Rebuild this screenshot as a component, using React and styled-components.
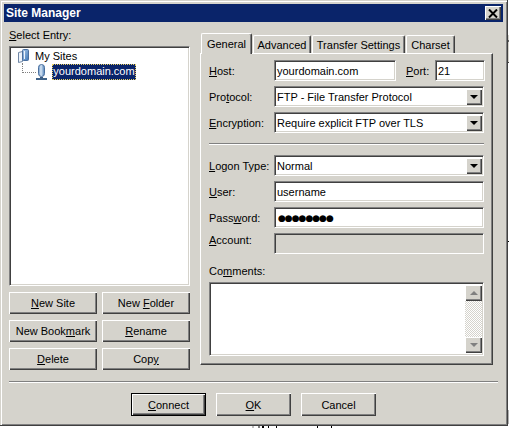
import React from 'react';
import styled, { createGlobalStyle } from 'styled-components';

const face = '#d5d3cc';
const navy = '#0a246a';

const GlobalStyle = createGlobalStyle`
  html, body {
    margin: 0;
    padding: 0;
    background: #fff;
    overflow: hidden;
  }
  * {
    box-sizing: border-box;
  }
`;

const Page = styled.div`
  width: 509px;
  height: 428px;
  overflow: hidden;
  font-family: 'Liberation Sans', Arial, sans-serif;
  font-size: 11px;
  color: #000;
`;

const TopArea = styled.div`
  display: flex;
`;

const Window = styled.div`
  width: 508px;
  height: 426px;
  flex: none;
  padding: 4px 4px 0 4px;
  background: ${face};
  border-right: 1px solid #404040;
  border-bottom: 1px solid #404040;
  box-shadow: inset 1px 1px 0 ${face}, inset 2px 2px 0 #fff, inset -1px -1px 0 #808080;
  display: flex;
  flex-direction: column;
`;

const SideStrip = styled.div`
  width: 1px;
  flex: none;
  padding-top: 35px;
`;

const SideMark = styled.div`
  height: ${(p) => p.$height}px;
  margin-bottom: ${(p) => p.$after}px;
  background: ${(p) => p.$color};
`;

const TitleBar = styled.div`
  height: 18px;
  flex: none;
  background: ${navy};
  color: #fff;
  font-weight: 700;
  font-size: 12px;
  padding: 0 2px;
  display: flex;
  align-items: center;
  justify-content: space-between;
`;

const CloseButton = styled.div`
  width: 16px;
  height: 14px;
  background: ${face};
  box-shadow: inset 1px 1px 0 #fff, inset -1px -1px 0 #404040, inset -2px -2px 0 #808080;
  display: flex;
  align-items: center;
  justify-content: center;
`;

const Main = styled.div`
  display: flex;
  padding: 6px 0 0 5px;
`;

const LeftColumn = styled.div`
  width: 181px;
  flex: none;
`;

const SelectLabel = styled.div`
  height: 18px;
  line-height: 14px;
`;

const Key = styled.u`
  text-underline-offset: 1px;
`;

const inset = `
  border: 1px solid;
  border-color: #808080 #fff #fff #808080;
  box-shadow: inset 1px 1px 0 #404040, inset -1px -1px 0 ${face};
`;

const Tree = styled.div`
  ${inset}
  height: 240px;
  background: #fff;
  padding: 2px 0 0 8px;
`;

const TreeRow = styled.div`
  display: flex;
  align-items: flex-start;
  height: 16px;
`;

const RootLabel = styled.span`
  margin-left: 6px;
  line-height: 14px;
`;

const Connector = styled.div`
  width: 14px;
  height: 10px;
  margin: -2px 0 0 4px;
  border-left: 1px dotted #808080;
  border-bottom: 1px dotted #808080;
  flex: none;
`;

const SiteIconBox = styled.div`
  margin-top: -1px;
  height: 16px;
  flex: none;
`;

const SelectedLabel = styled.span`
  width: 84px;
  margin: -1px 0 0 5px;
  height: 16px;
  line-height: 15px;
  text-align: center;
  white-space: nowrap;
  background: ${navy};
  color: #fff;
  outline: 1px dotted #e8d060;
  outline-offset: -1px;
`;

const ButtonGrid = styled.div`
  display: grid;
  grid-template-columns: 88px 88px;
  grid-auto-rows: 22px;
  column-gap: 5px;
  row-gap: 6px;
  margin-top: 6px;
`;

const Button = styled.div`
  background: ${face};
  box-shadow: inset 1px 1px 0 #fff, inset -1px -1px 0 #404040, inset -2px -2px 0 #808080;
  display: flex;
  align-items: center;
  justify-content: center;
  width: ${(p) => p.$width || 'auto'};
  ${(p) => p.$default && `
    outline: 1px solid #000;
    outline-offset: -1px;
    box-shadow: inset 2px 2px 0 #fff, inset -2px -2px 0 #404040, inset -3px -3px 0 #808080;
  `}
`;

const RightColumn = styled.div`
  width: 293px;
  margin-left: 10px;
  padding-top: 5px;
  flex: none;
`;

const TabStrip = styled.div`
  display: flex;
  align-items: flex-end;
  height: 20px;
  padding-left: 1px;
  column-gap: 1px;
`;

const Tab = styled.div`
  width: ${(p) => p.$width}px;
  height: ${(p) => (p.$active ? 21 : 18)}px;
  margin-bottom: ${(p) => (p.$active ? -1 : 0)}px;
  position: relative;
  z-index: ${(p) => (p.$active ? 1 : 0)};
  background: ${face};
  border-radius: 2px 2px 0 0;
  border-top: 1px solid #fff;
  border-left: 1px solid #fff;
  border-right: 1px solid #404040;
  box-shadow: inset -1px 0 0 #808080;
  display: flex;
  align-items: center;
  justify-content: center;
`;

const TabPanel = styled.div`
  height: 312px;
  border: 1px solid;
  border-color: #fff #404040 #404040 #fff;
  box-shadow: inset -1px -1px 0 #808080;
  padding: 6px 8px 0 8px;
`;

const FormRow = styled.div`
  display: flex;
  align-items: center;
  height: 21px;
  margin-bottom: 5px;
`;

const FieldLabel = styled.label`
  width: ${(p) => p.$width || 65}px;
  margin-left: ${(p) => p.$left || 0}px;
  margin-top: ${(p) => (p.$raised ? -7 : 0)}px;
  flex: none;
`;

const Field = styled.div`
  ${inset}
  height: 21px;
  width: ${(p) => (p.$width ? `${p.$width}px` : 'auto')};
  flex: ${(p) => (p.$width ? 'none' : 1)};
  background: ${(p) => (p.$disabled ? face : '#fff')};
  padding: 0 2px;
  display: flex;
  align-items: center;
  justify-content: space-between;
`;

const DropButton = styled.div`
  width: 16px;
  height: 16px;
  margin-right: -1px;
  background: ${face};
  box-shadow: inset 1px 1px 0 #fff, inset -1px -1px 0 #404040, inset -2px -2px 0 #808080;
  display: flex;
  align-items: center;
  justify-content: center;
  flex: none;
`;

const Arrow = styled.span`
  width: 0;
  height: 0;
  border-left: 4px solid transparent;
  border-right: 4px solid transparent;
  border-${(p) => (p.$up ? 'bottom' : 'top')}: 4px solid ${(p) => p.$color || '#000'};
`;

const Dots = styled.span`
  font-size: 9px;
  letter-spacing: -1px;
  font-family: 'DejaVu Sans', sans-serif;
  padding-left: 1px;
`;

const Divider = styled.div`
  height: 2px;
  background: #808080;
  border-bottom: 1px solid #fff;
  margin: ${(p) => p.$margin};
`;

const CommentsLabel = styled.div`
  margin-top: 10px;
  height: 18px;
  line-height: 14px;
`;

const TextArea = styled.div`
  ${inset}
  height: 74px;
  background: #fff;
  padding: 2px 1px 2px 2px;
  display: flex;
  justify-content: flex-end;
`;

const ScrollBar = styled.div`
  width: 17px;
  display: flex;
  flex-direction: column;
  justify-content: space-between;
  background: repeating-conic-gradient(#fff 0 25%, ${face} 0 50%) 0 0 / 2px 2px;
`;

const ScrollButton = styled(DropButton)`
  width: 17px;
  margin-right: 0;
`;

const BottomDivider = styled(Divider)`
  margin: 11px 0 0 5px;
  width: 489px;
`;

const Footer = styled.div`
  display: flex;
  padding: 10px 0 0 127px;
  column-gap: 10px;
  height: 33px;
`;

const Behind = styled.div`
  display: flex;
  height: 2px;
  padding-left: 252px;
`;

const Tick = styled.div`
  width: ${(p) => p.$width || 1}px;
  margin-left: ${(p) => p.$gap}px;
  background: ${(p) => p.$color || '#000'};
`;

function RootIcon() {
  return (
    <svg width="11" height="14" viewBox="0 0 11 14">
      <defs>
        <linearGradient id="rootBlue" x1="0" y1="0" x2="1" y2="1">
          <stop offset="0" stopColor="#a9c8e8" />
          <stop offset="1" stopColor="#3f78b8" />
        </linearGradient>
      </defs>
      <path d="M0.5 3.5 L4.5 2.5 V12.5 L0.5 13.5 Z" fill="#eef4fb" stroke="#6f86a5" />
      <rect x="4.5" y="0.5" width="6" height="11" rx="1" fill="url(#rootBlue)" stroke="#4a6f9e" />
      <rect x="6" y="2" width="1" height="8" fill="#eef4fb" />
    </svg>
  );
}

function SiteIcon() {
  return (
    <svg width="11" height="16" viewBox="0 0 11 16" display="block">
      <defs>
        <linearGradient id="siteBlue" x1="0" y1="0" x2="1" y2="0">
          <stop offset="0" stopColor="#5f8fc4" />
          <stop offset="0.4" stopColor="#dbe8f5" />
          <stop offset="1" stopColor="#4c7fb8" />
        </linearGradient>
      </defs>
      <rect x="2.5" y="0.5" width="6" height="12" rx="3" fill="url(#siteBlue)" stroke="#4a6f9e" />
      <rect x="4" y="13" width="3" height="1" fill="#3a5a80" />
      <rect x="0" y="14" width="11" height="2" fill="#3f6288" />
    </svg>
  );
}

function CloseIcon() {
  return (
    <svg width="10" height="9" viewBox="0 0 10 9">
      <path d="M1 0.5 L9 8.5 M9 0.5 L1 8.5" stroke="#000" strokeWidth="2" />
    </svg>
  );
}

function Select({ children }) {
  return (
    <Field>
      {children}
      <DropButton>
        <Arrow />
      </DropButton>
    </Field>
  );
}

export default function App() {
  return (
    <Page>
      <GlobalStyle />
      <TopArea>
        <Window>
          <TitleBar>
            Site Manager
            <CloseButton>
              <CloseIcon />
            </CloseButton>
          </TitleBar>
          <Main>
            <LeftColumn>
              <SelectLabel>
                <Key>S</Key>elect Entry:
              </SelectLabel>
              <Tree>
                <TreeRow>
                  <RootIcon />
                  <RootLabel>My Sites</RootLabel>
                </TreeRow>
                <TreeRow>
                  <Connector />
                  <SiteIconBox>
                    <SiteIcon />
                  </SiteIconBox>
                  <SelectedLabel>yourdomain.com</SelectedLabel>
                </TreeRow>
              </Tree>
              <ButtonGrid>
                <Button><span><Key>N</Key>ew Site</span></Button>
                <Button><span>New <Key>F</Key>older</span></Button>
                <Button><span>New Book<Key>m</Key>ark</span></Button>
                <Button><span><Key>R</Key>ename</span></Button>
                <Button><span><Key>D</Key>elete</span></Button>
                <Button><span>Cop<Key>y</Key></span></Button>
              </ButtonGrid>
            </LeftColumn>
            <RightColumn>
              <TabStrip>
                <Tab $active $width={51}>General</Tab>
                <Tab $width={58}>Advanced</Tab>
                <Tab $width={93}>Transfer Settings</Tab>
                <Tab $width={49}>Charset</Tab>
              </TabStrip>
              <TabPanel>
                <FormRow>
                  <FieldLabel><Key>H</Key>ost:</FieldLabel>
                  <Field $width={122}>yourdomain.com</Field>
                  <FieldLabel $width={29} $left={10}><Key>P</Key>ort:</FieldLabel>
                  <Field $width={50}>21</Field>
                </FormRow>
                <FormRow>
                  <FieldLabel>Pro<Key>t</Key>ocol:</FieldLabel>
                  <Select>FTP - File Transfer Protocol</Select>
                </FormRow>
                <FormRow>
                  <FieldLabel><Key>E</Key>ncryption:</FieldLabel>
                  <Select>Require explicit FTP over TLS</Select>
                </FormRow>
                <Divider $margin="10px 0 10px 0" />
                <FormRow>
                  <FieldLabel><Key>L</Key>ogon Type:</FieldLabel>
                  <Select>Normal</Select>
                </FormRow>
                <FormRow>
                  <FieldLabel><Key>U</Key>ser:</FieldLabel>
                  <Field>username</Field>
                </FormRow>
                <FormRow>
                  <FieldLabel>Pass<Key>w</Key>ord:</FieldLabel>
                  <Field><Dots>●●●●●●●●</Dots></Field>
                </FormRow>
                <FormRow>
                  <FieldLabel $raised><Key>A</Key>ccount:</FieldLabel>
                  <Field $disabled />
                </FormRow>
                <CommentsLabel>Co<Key>m</Key>ments:</CommentsLabel>
                <TextArea>
                  <ScrollBar>
                    <ScrollButton><Arrow $up $color="#808080" /></ScrollButton>
                    <ScrollButton><Arrow $color="#808080" /></ScrollButton>
                  </ScrollBar>
                </TextArea>
              </TabPanel>
            </RightColumn>
          </Main>
          <BottomDivider />
          <Footer>
            <Button $default $width="75px"><span><Key>C</Key>onnect</span></Button>
            <Button $width="75px"><span><Key>O</Key>K</span></Button>
            <Button $width="75px">Cancel</Button>
          </Footer>
        </Window>
        <SideStrip>
          <SideMark $height={5} $after={0} $color="#d5d3cc" />
          <SideMark $height={2} $after={0} $color="#606060" />
          <SideMark $height={20} $after={0} $color="#d5d3cc" />
          <SideMark $height={1} $after={178} $color="#404040" />
          <SideMark $height={1} $after={168} $color="#000" />
          <SideMark $height={14} $after={0} $color="#b0b0b0" />
        </SideStrip>
      </TopArea>
      <Behind>
        <Tick $gap={0} $width={2} $color="#c0c0c0" />
        <Tick $gap={4} $width={2} $color="#808080" />
        <Tick $gap={2} $width={2} />
        <Tick $gap={4} />
        <Tick $gap={7} />
        <Tick $gap={40} />
        <Tick $gap={13} />
      </Behind>
    </Page>
  );
}
